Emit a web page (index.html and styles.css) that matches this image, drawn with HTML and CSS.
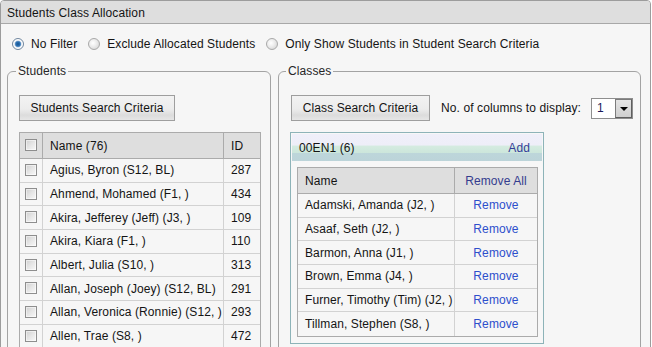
FILE: index.html
```html
<!DOCTYPE html>
<html>
<head>
<meta charset="utf-8">
<title>Students Class Allocation</title>
<link rel="stylesheet" href="styles.css">
</head>
<body>
<div class="panel">
  <div class="panel-title">Students Class Allocation</div>
  <div class="panel-body">
    <div class="filters">
      <label class="opt"><span class="radio checked"></span>No Filter</label>
      <label class="opt"><span class="radio"></span>Exclude Allocated Students</label>
      <label class="opt"><span class="radio"></span>Only Show Students in Student Search Criteria</label>
    </div>
    <div class="columns">
      <fieldset class="group students">
        <legend>Students</legend>
        <button class="btn btn-students">Students Search Criteria</button>
        <table class="grid student-grid">
          <colgroup><col class="c-chk"><col class="c-name"><col class="c-id"></colgroup>
          <thead>
            <tr><th class="chk"><span class="checkbox"></span></th><th>Name (76)</th><th>ID</th></tr>
          </thead>
          <tbody>
            <tr><td class="chk"><span class="checkbox"></span></td><td>Agius, Byron (S12, BL)</td><td>287</td></tr>
            <tr><td class="chk"><span class="checkbox"></span></td><td>Ahmend, Mohamed (F1, )</td><td>434</td></tr>
            <tr><td class="chk"><span class="checkbox"></span></td><td>Akira, Jefferey (Jeff) (J3, )</td><td>109</td></tr>
            <tr><td class="chk"><span class="checkbox"></span></td><td>Akira, Kiara (F1, )</td><td>110</td></tr>
            <tr><td class="chk"><span class="checkbox"></span></td><td>Albert, Julia (S10, )</td><td>313</td></tr>
            <tr><td class="chk"><span class="checkbox"></span></td><td>Allan, Joseph (Joey) (S12, BL)</td><td>291</td></tr>
            <tr><td class="chk"><span class="checkbox"></span></td><td>Allan, Veronica (Ronnie) (S12, )</td><td>293</td></tr>
            <tr><td class="chk"><span class="checkbox"></span></td><td>Allen, Trae (S8, )</td><td>472</td></tr>
          </tbody>
        </table>
      </fieldset>
      <fieldset class="group classes">
        <legend>Classes</legend>
        <div class="toolbar">
          <button class="btn btn-classes">Class Search Criteria</button>
          <span class="cols-label">No. of columns to display:</span>
          <div class="select"><span class="select-value">1</span><span class="select-btn"><span class="arrow"></span></span></div>
        </div>
        <div class="class-box">
          <div class="class-head"><span>00EN1&nbsp;(6)</span><a class="add-link">Add</a></div>
          <table class="grid class-grid">
            <colgroup><col class="c-cname"><col class="c-remove"></colgroup>
            <thead>
              <tr><th>Name</th><th class="center link-dark">Remove All</th></tr>
            </thead>
            <tbody>
              <tr><td>Adamski, Amanda (J2, )</td><td class="center link">Remove</td></tr>
              <tr><td>Asaaf, Seth (J2, )</td><td class="center link">Remove</td></tr>
              <tr><td>Barmon, Anna (J1, )</td><td class="center link">Remove</td></tr>
              <tr><td>Brown, Emma (J4, )</td><td class="center link">Remove</td></tr>
              <tr><td>Furner, Timothy (Tim) (J2, )</td><td class="center link">Remove</td></tr>
              <tr><td>Tillman, Stephen (S8, )</td><td class="center link">Remove</td></tr>
            </tbody>
          </table>
        </div>
      </fieldset>
    </div>
  </div>
</div>
</body>
</html>
```

FILE: styles.css
```css
html, body {
  margin: 0;
  padding: 0;
  background: #ffffff;
  overflow: hidden;
  height: 347px;
}

body {
  font-family: "Liberation Sans", Arial, sans-serif;
  font-size: 12px;
  letter-spacing: 0.1px;
  color: #141414;
}

.panel {
  width: 651px;
  height: 380px;
  box-sizing: border-box;
  border: 1px solid #9c9c9c;
  border-radius: 4px 4px 0 0;
  background: #f6f6f6;
  overflow: hidden;
}

.panel-title {
  height: 21px;
  padding-top: 1px;
  line-height: 22px;
  padding-left: 6px;
  background: #dedede;
  border-bottom: 1px solid #a8a8a8;
}

.filters {
  display: flex;
  align-items: center;
  padding: 12px 0 0 11px;
  height: 16px;
  line-height: 16px;
}

.opt {
  display: inline-flex;
  align-items: center;
  margin-right: 11px;
}

.radio {
  width: 12px;
  height: 12px;
  box-sizing: border-box;
  border-radius: 50%;
  border: 1px solid #a9a9a9;
  background: radial-gradient(circle at 40% 40%, #ffffff 0, #f0f0f0 35%, #cfcfcf 100%);
  margin-right: 7px;
}

.radio.checked {
  border-color: #70879f;
  background: radial-gradient(circle, #14538f 0, #2f72b4 2.2px, #7aa6d0 3px, #e9eef4 3.6px, #ffffff 4.5px, #d6dde4 100%);
}

.columns {
  display: flex;
  gap: 7px;
  padding-left: 6px;
  margin-top: 11px;
}

.group {
  margin: 0;
  min-width: 0;
  border: 1px solid #a3a3a3;
  border-radius: 6px;
  padding: 16px 9px 0 11px;
  height: 300px;
  box-sizing: border-box;
  flex-shrink: 0;
}

.group legend {
  padding: 0 2px;
  margin-left: -3px;
  line-height: 16px;
  color: #262626;
}

.students {
  width: 264px;
}

.classes {
  width: 363px;
  padding-left: 12px;
  padding-right: 4px;
}

.classes legend {
  margin-left: -5px;
}

.btn {
  font-family: "Liberation Sans", Arial, sans-serif;
  font-size: 12px;
  letter-spacing: 0.1px;
  color: #141414;
  height: 26px;
  box-sizing: border-box;
  border: 1px solid #9e9e9e;
  border-radius: 0;
  padding: 0;
  background: linear-gradient(#f3f3f3 0, #ececec 55%, #dcdcdc 80%, #e6e6e6 100%);
  display: block;
  flex-shrink: 0;
}

.btn-students {
  width: 156px;
}

.btn-classes {
  width: 139px;
}

.toolbar {
  display: flex;
  align-items: center;
}

.cols-label {
  margin-left: 11px;
  white-space: nowrap;
  flex-shrink: 0;
}

.select {
  margin-left: 10px;
  width: 42px;
  height: 21px;
  flex-shrink: 0;
  box-sizing: border-box;
  border: 1px solid #8e8e8e;
  background: #ffffff;
  display: flex;
  align-items: center;
  justify-content: space-between;
}

.select-value {
  padding-left: 5px;
  color: #1a1a5a;
}

.select-btn {
  width: 17px;
  height: 19px;
  box-sizing: border-box;
  border: 1px solid #7c7c7c;
  border-right-color: #5e5e5e;
  border-bottom-color: #5e5e5e;
  background: linear-gradient(#e4e4e4, #cfcfcf);
  display: flex;
  align-items: center;
  justify-content: center;
}

.arrow {
  width: 0;
  height: 0;
  border-left: 4px solid transparent;
  border-right: 4px solid transparent;
  border-top: 4px solid #000000;
  margin-top: 1px;
}

.grid {
  border-collapse: separate;
  border-spacing: 0;
  table-layout: fixed;
  border: 1px solid #ababab;
  background: #f6f6f6;
}

.grid th, .grid td {
  padding: 0 0 0 7px;
  text-align: left;
  font-weight: normal;
  white-space: nowrap;
  overflow: hidden;
  box-sizing: border-box;
  border-right: 1px solid #d2d2d2;
  border-bottom: 1px solid #d2d2d2;
}

.grid th:last-child, .grid td:last-child {
  border-right: 0;
}

.grid tbody tr:last-child td {
  border-bottom: 0;
}

.grid thead tr {
  height: 26px;
}

.grid thead th {
  background: #dedede;
  border-bottom-color: #ababab;
  border-right-color: #ababab;
}

.grid tbody tr {
  height: 23.67px;
}

.student-grid {
  width: 242px;
  margin-top: 11px;
}

.c-chk { width: 23px; }
.c-name { width: 181px; }
.c-id { width: 36px; }

.grid .chk {
  padding: 0;
  text-align: center;
}

.checkbox {
  display: inline-block;
  width: 12px;
  height: 12px;
  box-sizing: border-box;
  border: 1px solid #8e8e8e;
  background: linear-gradient(135deg, #cfcfcf 0, #e6e6e6 50%, #f8f8f8 100%);
  box-shadow: inset 0 0 0 1px rgba(255, 255, 255, 0.5);
  vertical-align: middle;
  margin-top: -2px;
}

.class-box {
  margin-top: 11px;
  margin-left: -1px;
  width: 254px;
  height: 212px;
  box-sizing: border-box;
  border: 1px solid #8db3b8;
  padding: 1px;
  background: #f7f7f7;
}

.class-head {
  height: 27px;
  box-sizing: border-box;
  display: flex;
  align-items: center;
  justify-content: space-between;
  padding: 1px 12px 0 7px;
  background: linear-gradient(#efeff9 0, #eeeef8 40%, #d4ebe0 46%, #cce6db 70%, #bdd6da 72%, #bcd4d9 100%);
}

.add-link {
  color: #353d9b;
}

.class-grid {
  width: 241px;
  margin: 6px 0 0 5px;
}

.c-cname { width: 157px; }
.c-remove { width: 82px; }

.grid .center {
  text-align: center;
  padding: 0;
}

.link {
  color: #2d4fcc;
}

.grid th.link-dark {
  color: #343c8e;
}
```
